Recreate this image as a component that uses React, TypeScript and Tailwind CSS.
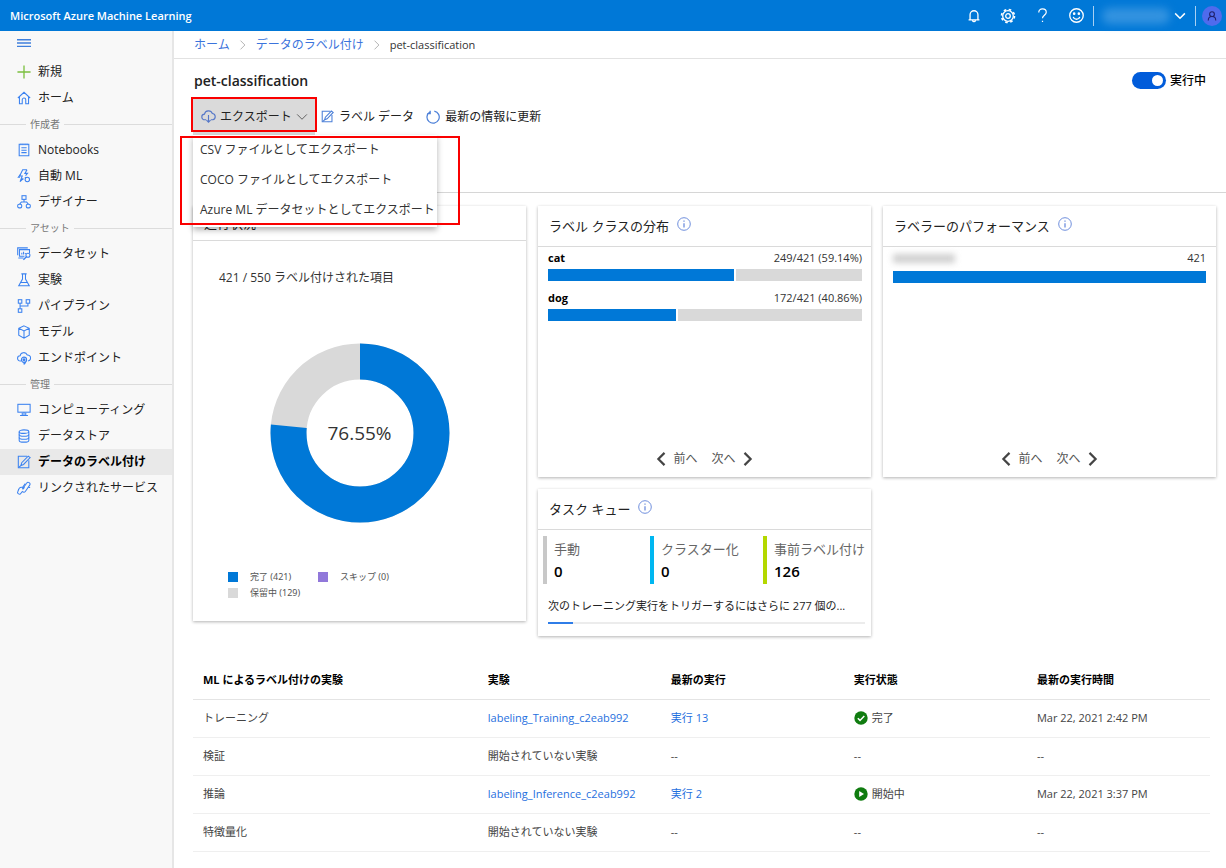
import { useState } from "react";
import type { ReactNode } from "react";

function Icon({ children, size = 14, className = "", stroke = 1 }: { children: ReactNode; size?: number; className?: string; stroke?: number }) {
  return (
    <svg
      xmlns="http://www.w3.org/2000/svg"
      width={size}
      height={size}
      viewBox="0 0 16 16"
      fill="none"
      stroke="currentColor"
      strokeWidth={stroke}
      className={`shrink-0 ${className}`}
      aria-hidden="true"
    >
      {children}
    </svg>
  );
}

const icons = {
  plus: <path d="M8 0.5v15M0.5 8h15" strokeWidth="1.5" />,
  home: <path d="M1 8 8 1.5 15 8M2.8 6.8V14.5H6V10a2 2 0 0 1 4 0v4.5h3.2V6.8" />,
  notebook: (
    <>
      <path d="M2.5 1.5h11v13h-11zM4.500 0.500v2M6.800 0.500v2M9.200 0.500v2M11.500 0.500v2" />
      <path d="M5 5.500h6M5 8.200h6M5 11h6" />
    </>
  ),
  automl: (
    <>
      <path d="M11.5 0.8H6.5L3 8h3L3.5 14.5 7 11M11.5 0.8 9 5h3L9.8 7.5" />
      <circle cx="11.8" cy="12" r="2.5" />
      <path d="M5 11.5h2.5M4 6l-2.5 3.5h2M9 9.2l1.2 1.2" />
    </>
  ),
  designer: (
    <>
      <rect x="5.7" y="0.8" width="4.6" height="4.2" />
      <rect x="0.8" y="10.5" width="4.6" height="4.2" rx="1.5" />
      <rect x="10.6" y="10.5" width="4.6" height="4.2" rx="1.5" />
      <path d="M8 5v3M3.1 10.5 5 8h6l1.9 2.5" />
    </>
  ),
  dataset: (
    <>
      <path d="M0.8 9.5V1h11.5" />
      <path d="M8.500 10.500H2.800V3h11.500v4" />
      <path d="M5.5 8.500v-2M7.500 8.500v-3M9.500 8V6.800M1.500 12.500h6" />
      <circle cx="12.5" cy="9.5" r="2.3" />
      <path d="m10.8 11.2-3.500 3.500" strokeWidth="1.6" />
    </>
  ),
  flask: <path d="M5 1h6M6.3 1v6L2 14.500h12L9.700 7V1M4.300 10.800h7.400" />,
  pipeline: (
    <>
      <rect x="1.5" y="0.8" width="4" height="4" />
      <rect x="10.5" y="0.8" width="4" height="4" />
      <rect x="1.5" y="11.2" width="4" height="4" />
      <path d="M3.5 4.8v6.400M12.500 4.800V8h-9" />
    </>
  ),
  cube: <path d="m8 1 6 2.800v7.900L8 15l-6-3.300V3.800zM2 3.800l6 3 6-3M8 6.800V15" />,
  endpoint: (
    <>
      <path d="M4.5 11.5H3.8a3 3 0 0 1-.3-6 4.300 4.300 0 0 1 8.200-1 3.400 3.400 0 0 1 .8 6.800" />
      <circle cx="8" cy="10" r="3" />
      <circle cx="8" cy="10" r="1.200" fill="currentColor" />
      <path d="m10 12.500-1.500 2.500M8 13v2.500" />
    </>
  ),
  monitor: (
    <>
      <rect x="1" y="1.5" width="14" height="9" />
      <path d="M8 10.500v3.500M3.500 14.300h9M6 11v3M10 11v3" />
    </>
  ),
  database: (
    <>
      <ellipse cx="8" cy="3" rx="5.5" ry="2" />
      <path d="M2.5 3v10c0 1.100 2.500 2 5.500 2s5.500-.9 5.500-2V3" />
      <path d="M2.500 6.300c0 1.100 2.500 2 5.500 2s5.500-.9 5.500-2M2.500 9.700c0 1.100 2.500 2 5.500 2s5.500-.9 5.500-2" />
    </>
  ),
  label: (
    <>
      <path d="M11.5 1.5h-10v13h12V6" />
      <path d="m4.500 12 .9-3.200L12.800 1.300l2.200 1.700-7.500 7.800zM2 14.200 4.500 12" />
    </>
  ),
  link: (
    <>
      <path d="M6 9.500 11 2.500a2 2 0 0 1 3.500 2.200l-5 7.300a2 2 0 0 1-3.200 0" />
      <path d="M8.500 7 7 9.500M9.500 3 5.800 8M6.500 7.500a3 3 0 0 0-4.500 2L1 12a2 2 0 0 0 3.500 2l2-2.500M13 7.500h2" />
    </>
  ),
  cloud: (
    <>
      <path d="M5.500 11.500H4a3 3 0 0 1-.3-6 4.400 4.400 0 0 1 8.400-.7 3.400 3.400 0 0 1 .4 6.700h-2" />
      <path d="M8 6.500V14M5.800 11.800 8 14l2.200-2.200" />
    </>
  ),
  refresh: <path d="M4.8 0.800v3.400H1.400M9.500 1.200a7 7 0 1 1-5.200 1" />,
  chevronDown: <path d="m1.500 4.500 6.500 6.500 6.500-6.500" />,
  chevronRight: <path d="m4 1 7 7-7 7" />,
  chevronLeft: <path d="M12 1 5 8l7 7" />,
  info: (
    <>
      <circle cx="8" cy="8" r="7.200" />
      <path d="M8 7v5M8 4v1.500" strokeWidth="1.300" />
    </>
  ),
};

type NavItem = { label: string; icon: ReactNode; active?: boolean; color?: string };
type NavGroup = { title?: string; items: NavItem[] };

const nav: NavGroup[] = [
  {
    items: [
      { label: "新規", icon: icons.plus, color: "text-[#7bbf3f]" },
      { label: "ホーム", icon: icons.home },
    ],
  },
  {
    title: "作成者",
    items: [
      { label: "Notebooks", icon: icons.notebook },
      { label: "自動 ML", icon: icons.automl },
      { label: "デザイナー", icon: icons.designer },
    ],
  },
  {
    title: "アセット",
    items: [
      { label: "データセット", icon: icons.dataset },
      { label: "実験", icon: icons.flask },
      { label: "パイプライン", icon: icons.pipeline },
      { label: "モデル", icon: icons.cube },
      { label: "エンドポイント", icon: icons.endpoint },
    ],
  },
  {
    title: "管理",
    items: [
      { label: "コンピューティング", icon: icons.monitor },
      { label: "データストア", icon: icons.database },
      { label: "データのラベル付け", icon: icons.label, active: true },
      { label: "リンクされたサービス", icon: icons.link },
    ],
  },
];

const exportOptions = ["CSV ファイルとしてエクスポート", "COCO ファイルとしてエクスポート", "Azure ML データセットとしてエクスポート"];

const classes = [
  { name: "cat", count: 249, text: "249/421 (59.14%)" },
  { name: "dog", count: 172, text: "172/421 (40.86%)" },
];

const queue = [
  { label: "手動", value: 0, border: "border-[#c8c8c8]" },
  { label: "クラスター化", value: 0, border: "border-[#00b7f1]" },
  { label: "事前ラベル付け", value: 126, border: "border-[#b4d800]" },
];

const runs = [
  { name: "トレーニング", experiment: "labeling_Training_c2eab992", run: "実行 13", status: "完了", time: "Mar 22, 2021 2:42 PM" },
  { name: "検証" },
  { name: "推論", experiment: "labeling_Inference_c2eab992", run: "実行 2", status: "開始中", time: "Mar 22, 2021 3:37 PM" },
  { name: "特徴量化" },
];

function TopBar() {
  return (
    <header className="flex h-[31px] items-center justify-between bg-[#0078d7] pl-[10px] pr-1 text-white">
      <span className="text-[11px] font-semibold leading-4">Microsoft Azure Machine Learning</span>
      <div className="flex items-center">
        <div className="flex items-center gap-[18px] pr-[9px]">
          <button aria-label="通知" className="flex w-4 justify-center">
            <Icon size={14} stroke={1.5}>
              <path d="M3.500 12.500V6.500a4.500 4.500 0 0 1 9 0v6M1.800 12.500h12.400M6.500 13a1.500 1.500 0 0 0 3 0" />
            </Icon>
          </button>
          <button aria-label="設定" className="flex w-4 justify-center">
            <Icon size={16} stroke={1.3}>
              <circle cx="8" cy="8" r="5.3" />
              <circle cx="8" cy="8" r="2.3" />
              <circle cx="8" cy="8" r="6.5" strokeDasharray="2.550 2.550" strokeWidth="1.600" />
            </Icon>
          </button>
          <button aria-label="ヘルプ" className="flex w-4 justify-center">
            <Icon size={15} stroke={1.3}>
              <path d="M4 4.800C4 2.500 5.600 1 8 1s4 1.500 4 3.600c0 3-4 3.400-4 6.400M8 13.500V15" />
            </Icon>
          </button>
          <button aria-label="フィードバック" className="flex w-4 justify-center">
            <Icon size={15} stroke={1.4}>
              <circle cx="8" cy="8" r="7.200" />
              <path d="M4.500 9.500a3.700 3.700 0 0 0 7 0" />
              <circle cx="5.500" cy="6" r="0.700" fill="currentColor" />
              <circle cx="10.500" cy="6" r="0.700" fill="currentColor" />
            </Icon>
          </button>
        </div>
        <div className="flex h-5 items-center gap-1 border-x border-[#a9d0f2] pl-2 pr-[9px]">
          <span className="h-4 w-[68px] rounded-lg bg-[#3393e0] blur-[4px]" />
          <button aria-label="アカウントの切り替え" className="flex">
            <Icon size={12} stroke={2}>{icons.chevronDown}</Icon>
          </button>
        </div>
        <button aria-label="アカウント" className="ml-[6px] flex h-5 w-5 items-center justify-center rounded-full bg-[#4f6bed] text-[#20206a]">
          <Icon size={10} stroke={1.8}>
            <circle cx="8" cy="5" r="3.800" />
            <path d="M2 15c0-4 2.500-6.200 6-6.200s6 2.200 6 6.200" />
          </Icon>
        </button>
      </div>
    </header>
  );
}

function Sidebar() {
  return (
    <nav className="w-[174px] shrink-0 border-r-2 border-[#e6e6e6] bg-[#f8f8f8] text-[12px] leading-4 text-[#222]">
      <button aria-label="メニュー" className="mb-1 flex h-6 w-full items-center pl-[17px] text-[#3f7fdc]">
        <Icon size={14} stroke={1.6}>
          <path d="M0 4.200h16M0 8h16M0 11.800h16" />
        </Icon>
      </button>
      {nav.map((group, i) => (
        <div key={i}>
          {group.title && (
            <div className="flex h-[26px] items-center gap-1 text-[10px] text-[#777]">
              <span className="h-px w-[26px] bg-[#dcdcdc]" />
              {group.title}
              <span className="h-px flex-1 bg-[#dcdcdc]" />
            </div>
          )}
          <ul>
            {group.items.map((item) => (
              <li key={item.label}>
                <a
                  href="#"
                  className={`flex h-[26px] items-center gap-[7px] pl-[17px] ${item.active ? "bg-[#e9e9e9] font-semibold text-black" : ""}`}
                >
                  <Icon size={14} stroke={1.2} className={item.color ?? "text-[#3b82f0]"}>{item.icon}</Icon>
                  {item.label}
                </a>
              </li>
            ))}
          </ul>
        </div>
      ))}
    </nav>
  );
}

function Card({ title, info, className = "", children }: { title: string; info?: boolean; className?: string; children: ReactNode }) {
  return (
    <section className={`flex flex-col bg-white shadow-[0_1px_3px_rgba(0,0,0,0.3)] ${className}`}>
      <h2 className={`flex items-center gap-2 border-b border-[#dadada] pl-[11px] text-[13px] leading-5 text-[#222] ${info ? "h-[41px]" : "h-[35px]"}`}>
        {title}
        {info && <Icon size={14} className="mb-1 text-[#5b7fd8]">{icons.info}</Icon>}
      </h2>
      {children}
    </section>
  );
}

function Pager() {
  return (
    <div className="mt-auto flex justify-center gap-[14px] pb-[10px] text-[12px] leading-4 text-[#555]">
      <button className="flex items-center gap-[5px]">
        <Icon size={14} stroke={2.5} className="text-[#444]">{icons.chevronLeft}</Icon>
        前へ
      </button>
      <button className="flex items-center gap-[5px]">
        次へ
        <Icon size={14} stroke={2.5} className="text-[#444]">{icons.chevronRight}</Icon>
      </button>
    </div>
  );
}

function Donut() {
  const r = 71.5;
  const length = 2 * Math.PI * r;
  const done = 0.764 * length;

  return (
    <div className="relative mx-auto mt-[57px] h-[180px] w-[180px]">
      <svg viewBox="0 0 180 180" className="h-full w-full -rotate-90" fill="none" strokeWidth="36">
        <circle cx="90" cy="90" r={r} stroke="#d9d9d9" />
        <circle cx="90" cy="90" r={r} stroke="#0078d7" strokeDasharray={`${done} ${length}`} />
      </svg>
      <span className="absolute inset-0 flex items-center justify-center text-[19px] leading-6 text-[#333]">76.55%</span>
    </div>
  );
}

function LegendItem({ color, text }: { color: string; text: string }) {
  return (
    <li className="flex items-center gap-3">
      <span className={`h-[10px] w-[10px] ${color}`} />
      {text}
    </li>
  );
}

function RunStatus({ status }: { status: string }) {
  return (
    <span className="flex items-center gap-1">
      <svg width="14" height="14" viewBox="0 0 14 14" aria-hidden="true">
        <circle cx="7" cy="7" r="6.700" fill="#107c10" />
        {status === "完了" ? (
          <path d="m3.800 7.200 2.200 2.200 4.300-4.500" fill="none" stroke="#fff" strokeWidth="1.500" />
        ) : (
          <path d="M5.200 3.900v6.200L10 7z" fill="#fff" />
        )}
      </svg>
      {status}
    </span>
  );
}

export default function App() {
  const [running, setRunning] = useState(true);
  const [menuOpen, setMenuOpen] = useState(true);

  return (
    <div className="flex min-h-screen flex-col bg-white font-['Open_Sans','Noto_Sans_CJK_JP',sans-serif] text-[#222]">
      <TopBar />
      <div className="flex flex-1">
        <Sidebar />
        <main className="min-w-0 flex-1">
          <nav className="flex h-7 items-center gap-2 border-b border-[#e2e2e2] pl-5 text-[12px] leading-4 text-[#3b74dc]">
            <a href="#">ホーム</a>
            <Icon size={10} stroke={1.2} className="text-[#999]">{icons.chevronRight}</Icon>
            <a href="#">データのラベル付け</a>
            <Icon size={10} stroke={1.2} className="text-[#999]">{icons.chevronRight}</Icon>
            <span className="text-[11px] text-[#333]">pet-classification</span>
          </nav>

          <div className="flex h-[39px] items-center justify-between pl-5 pr-5 pt-1">
            <h1 className="text-[14px] font-semibold leading-5 text-[#222]">pet-classification</h1>
            <label className="flex items-center gap-1 text-[12px] font-medium leading-4 text-black">
              <input
                type="checkbox"
                role="switch"
                checked={running}
                onChange={(e) => setRunning(e.target.checked)}
                className="h-[17px] w-[34px] appearance-none rounded-full bg-[#999] before:m-[3px] before:block before:h-[11px] before:w-[11px] before:rounded-full before:bg-white checked:bg-[#015cda] checked:before:ml-5"
              />
              実行中
            </label>
          </div>

          <div className="ml-[19px] flex h-[95px] items-start border-b border-[#d6d6d6] text-[12px] leading-4">
            <div className="relative">
              <button
                aria-expanded={menuOpen}
                onClick={() => setMenuOpen(!menuOpen)}
                className="flex h-[37px] w-[122px] items-center gap-1 bg-[#dadada] pl-2"
              >
                <Icon size={15} stroke={1.2} className="text-[#5577c8]">{icons.cloud}</Icon>
                エクスポート
                <Icon size={12} stroke={1.2} className="text-[#555]">{icons.chevronDown}</Icon>
              </button>
              <span className="pointer-events-none absolute -inset-x-[2px] -top-px z-20 h-[35px] border-2 border-[#fa0000]" />
              {menuOpen && (
                <>
                  <ul className="absolute left-0 top-[37px] z-10 w-[244px] bg-white pb-[2px] text-[12px] text-[#333] shadow-[0_3px_6px_rgba(0,0,0,0.3)]">
                    {exportOptions.map((option) => (
                      <li key={option}>
                        <button className="flex h-[30px] w-full items-center whitespace-nowrap pl-[7px]">{option}</button>
                      </li>
                    ))}
                  </ul>
                  <span className="pointer-events-none absolute -left-[13px] top-[38px] z-20 h-[89px] w-[280px] border-2 border-[#fa0000]" />
                </>
              )}
            </div>
            <button className="flex h-[37px] items-center gap-[5px] pl-[6px]">
              <Icon size={13} stroke={1.3} className="text-[#4d80d8]">{icons.label}</Icon>
              ラベル データ
            </button>
            <button className="flex h-[37px] items-center gap-[5px] pl-3">
              <Icon size={14} stroke={1.4} className="text-[#4d80d8]">{icons.refresh}</Icon>
              最新の情報に更新
            </button>
          </div>

          <div className="grid grid-cols-3 items-start gap-3 pl-[19px] pr-[10px] pt-[13px]">
            <Card title="進行状況" className="pb-5">
              <p className="pl-[26px] pt-[29px] text-[12px] leading-4 text-[#333]">421 / 550 ラベル付けされた項目</p>
              <Donut />
              <ul className="ml-[35px] mt-[46px] grid w-[180px] grid-cols-2 font-['Noto_Sans','Noto_Sans_CJK_JP',sans-serif] text-[9px] leading-4 text-[#555]">
                <LegendItem color="bg-[#0078d7]" text="完了 (421)" />
                <LegendItem color="bg-[#9178da]" text="スキップ (0)" />
                <LegendItem color="bg-[#d9d9d9]" text="保留中 (129)" />
              </ul>
            </Card>

            <div className="flex min-w-0 flex-col gap-3">
              <Card title="ラベル クラスの分布" info className="min-h-[271px]">
                <ul className="flex flex-col gap-[9px] pl-[10px] pr-[9px] pt-[3px] text-[11px] leading-4">
                  {classes.map((c) => (
                    <li key={c.name}>
                      <div className="flex justify-between">
                        <span className="font-bold text-black">{c.name}</span>
                        <span className="text-[#333]">{c.text}</span>
                      </div>
                      <div className="mt-[3px] flex h-3 gap-[2px]">
                        <div className="bg-[#0078d7]" style={{ width: `${(c.count / 421) * 100}%` }} />
                        <div className="flex-1 bg-[#d9d9d9]" />
                      </div>
                    </li>
                  ))}
                </ul>
                <Pager />
              </Card>

              <Card title="タスク キュー" info className="pb-3">
                <dl className="grid grid-cols-[107px_113px_1fr] pl-[5px] pt-[6px]">
                  {queue.map((q) => (
                    <div key={q.label} className={`whitespace-nowrap border-l-4 pl-[7px] pt-[3px] pb-px ${q.border}`}>
                      <dt className="text-[13px] leading-5 text-[#666]">{q.label}</dt>
                      <dd className="text-[15px] font-semibold leading-6 text-black">{q.value}</dd>
                    </div>
                  ))}
                </dl>
                <p className="truncate pl-[10px] pt-[14px] text-[11px] leading-4 text-[#222]">
                  次のトレーニング実行をトリガーするにはさらに 277 個の...
                </p>
                <div className="ml-[10px] mr-[6px] mt-2 h-[2px] bg-[#ececec]">
                  <div className="h-full w-[8%] bg-[#2f7de8]" />
                </div>
              </Card>
            </div>

            <Card title="ラベラーのパフォーマンス" info className="min-h-[271px]">
              <div className="pl-[10px] pr-[10px] pt-[3px] text-[11px] leading-4 text-[#333]">
                <div className="flex items-center justify-between">
                  <span className="h-[9px] w-[62px] bg-[#cfcfcf] blur-[3px]" />
                  421
                </div>
                <div className="mt-[5px] h-3 bg-[#0078d7]" />
              </div>
              <Pager />
            </Card>
          </div>

          <div className="pl-[19px] pr-4 pt-[25px]">
            <table className="w-full table-fixed text-left text-[11px] leading-4 text-[#444]">
              <colgroup>
                <col className="w-[28%]" />
                <col className="w-[18%]" />
                <col className="w-[18%]" />
                <col className="w-[18%]" />
                <col className="w-[18%]" />
              </colgroup>
              <thead>
                <tr className="h-[38px] border-b border-[#e4e4e4] text-black">
                  <th className="pl-[10px] font-bold">ML によるラベル付けの実験</th>
                  <th className="pl-[10px] font-bold">実験</th>
                  <th className="pl-[10px] font-bold">最新の実行</th>
                  <th className="pl-[10px] font-bold">実行状態</th>
                  <th className="pl-[10px] font-bold">最新の実行時間</th>
                </tr>
              </thead>
              <tbody>
                {runs.map((row) => (
                  <tr key={row.name} className="h-[38px] border-b border-[#efefef]">
                    <td className="pl-[10px]">{row.name}</td>
                    <td className="whitespace-nowrap pl-[10px]">
                      {row.experiment ? <a href="#" className="text-[#1f6fde]">{row.experiment}</a> : "開始されていない実験"}
                    </td>
                    <td className="pl-[10px]">{row.run ? <a href="#" className="text-[#1f6fde]">{row.run}</a> : "--"}</td>
                    <td className="pl-[10px]">{row.status ? <RunStatus status={row.status} /> : "--"}</td>
                    <td className="pl-[10px]">{row.time ?? "--"}</td>
                  </tr>
                ))}
              </tbody>
            </table>
          </div>
        </main>
      </div>
    </div>
  );
}
